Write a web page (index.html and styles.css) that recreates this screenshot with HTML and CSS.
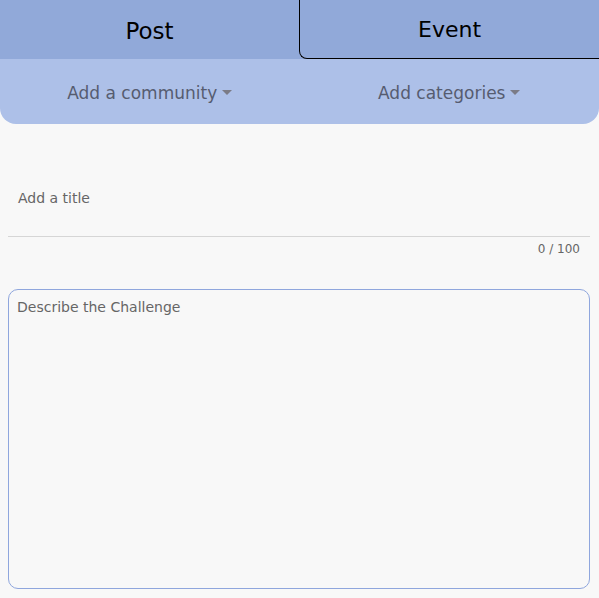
FILE: index.html
```html
<!DOCTYPE html>
<html>
<head>
<meta charset="utf-8">
<link rel="stylesheet" href="styles.css">
</head>
<body>
<div class="header">
  <div class="tabs">
    <div class="tab tab-active">Post</div>
    <div class="tab tab-other">Event</div>
  </div>
  <div class="pickers">
    <div class="picker">Add a community<span class="caret"></span></div>
    <div class="picker">Add categories<span class="caret"></span></div>
  </div>
</div>
<div class="form">
  <div class="title-field">
    <div class="title-input">Add a title</div>
  </div>
  <div class="counter">0 / 100</div>
  <div class="desc">Describe the Challenge</div>
</div>
</body>
</html>
```
FILE: styles.css
```css
* { box-sizing: border-box; }
html, body { margin: 0; padding: 0; }
body {
  background: #f8f8f8;
  font-family: "DejaVu Sans", sans-serif;
  width: 599px;
  height: 598px;
  overflow: hidden;
}
.header {
  background: #adc0e8;
  border-radius: 0 0 16px 16px;
}
.tabs {
  display: flex;
  height: 59px;
  background: #91a9d9;
}
.tab {
  flex: 1;
  display: flex;
  align-items: center;
  justify-content: center;
  font-size: 22px;
  color: #000;
}
.tab-active { padding-top: 2px; font-size: 23px; }
.tab-other {
  border-left: 1.5px solid #000;
  border-bottom: 1.5px solid #000;
  border-bottom-left-radius: 8px;
}
.pickers {
  display: flex;
  height: 65px;
}
.picker {
  flex: 1;
  display: flex;
  align-items: center;
  justify-content: center;
  font-size: 17px;
  color: #565c70;
  padding-top: 2px;
}
.caret {
  display: inline-block;
  width: 0;
  height: 0;
  border-left: 5px solid transparent;
  border-right: 5px solid transparent;
  border-top: 5px solid #7b7b86;
  margin-left: 5px;
  margin-top: 0;
}
.form {
  padding: 0 9px 0 8px;
}
.title-field {
  height: 113px;
  border-bottom: 1px solid #d6d6d6;
  display: flex;
  align-items: flex-end;
  padding: 0 10px 30px;
}
.title-input {
  font-size: 14px;
  color: #666;
}
.counter {
  text-align: right;
  font-size: 12px;
  color: #666;
  padding: 5px 10px 0 0;
  height: 52px;
}
.desc {
  height: 300px;
  border: 1px solid #8fa6dd;
  border-radius: 10px;
  padding: 9px 8px;
  font-size: 14px;
  color: #666;
}
```
